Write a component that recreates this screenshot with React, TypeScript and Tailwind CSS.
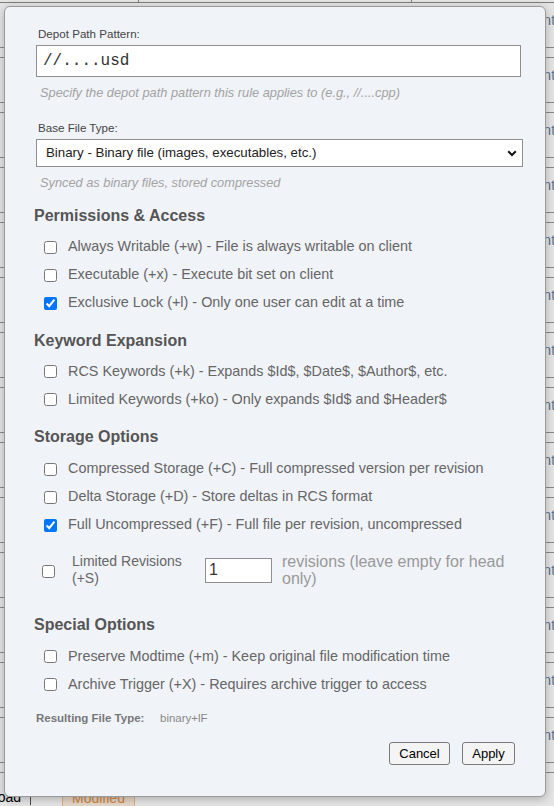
import React from 'react';

type Item = { label: string; checked: boolean };

const sections: { title: string; headGap: string; rowGap: string; items: Item[] }[] = [
  {
    title: 'Permissions & Access',
    headGap: 'mt-[16px]',
    rowGap: 'mt-[8px]',
    items: [
      { label: 'Always Writable (+w) - File is always writable on client', checked: false },
      { label: 'Executable (+x) - Execute bit set on client', checked: false },
      { label: 'Exclusive Lock (+l) - Only one user can edit at a time', checked: true },
    ],
  },
  {
    title: 'Keyword Expansion',
    headGap: 'mt-[14px]',
    rowGap: 'mt-[7.5px]',
    items: [
      { label: 'RCS Keywords (+k) - Expands $Id$, $Date$, $Author$, etc.', checked: false },
      { label: 'Limited Keywords (+ko) - Only expands $Id$ and $Header$', checked: false },
    ],
  },
  {
    title: 'Storage Options',
    headGap: 'mt-[13.5px]',
    rowGap: 'mt-[9px]',
    items: [
      { label: 'Compressed Storage (+C) - Full compressed version per revision', checked: false },
      { label: 'Delta Storage (+D) - Store deltas in RCS format', checked: false },
      { label: 'Full Uncompressed (+F) - Full file per revision, uncompressed', checked: true },
    ],
  },
];

const special: Item[] = [
  { label: 'Preserve Modtime (+m) - Keep original file modification time', checked: false },
  { label: 'Archive Trigger (+X) - Requires archive trigger to access', checked: false },
];

const CheckRow: React.FC<{ item: Item }> = ({ item }) => (
  <label className="flex h-[28px] items-center">
    <input type="checkbox" defaultChecked={item.checked} className="m-0 ml-[8px] h-[13px] w-[13px]" />
    <span className="ml-[11px] text-[14.4px] text-[#666]">{item.label}</span>
  </label>
);

const Heading: React.FC<{ children: React.ReactNode; className?: string }> = ({ children, className }) => (
  <h3 className={`-ml-[2px] text-[16px] font-bold leading-[19px] text-[#555] ${className ?? ''}`}>{children}</h3>
);

// the page behind the dialog: only its edges show
const BackgroundTable: React.FC = () => {
  const rows = Array.from({ length: 14 });
  return (
    <div className="flex flex-col">
      <div className="flex h-[3px] border-b border-[#8c8c8c]">
        <div className="w-[139px] border-r border-[#8c8c8c]" />
        <div className="w-[273px] border-r border-[#8c8c8c]" />
      </div>
      {rows.map((_, i) => (
        <React.Fragment key={i}>
          <div className="flex h-[45px] items-start border-b border-[#9a9a9a] pt-[9px]">
            <span className="ml-[506px] text-[14px] leading-[16px] text-[#5f7b9c]">Content</span>
          </div>
          <div className="h-[10px] border-b border-[#9a9a9a]" />
        </React.Fragment>
      ))}
      <div className="flex h-[45px] items-start pt-[16px]">
        <div className="flex w-[31px] justify-end overflow-hidden border-r border-[#555] pr-[9px]">
          <span className="shrink-0 whitespace-nowrap text-[14px] leading-[16px] text-black">Download</span>
        </div>
        <span className="ml-[31px] border border-[#f3c28e] bg-[#fff0df] px-[9px] text-[14px] leading-[16px] text-[#e8944a]">
          Modified
        </span>
      </div>
    </div>
  );
};

const App: React.FC = () => {
  return (
    <div className="relative h-[806px] w-[554px] overflow-hidden bg-white font-['Liberation_Sans',Arial,sans-serif]">
      <BackgroundTable />
      <div className="absolute inset-0 bg-black/10" />

      <div className="absolute left-[4px] top-[6px] h-[791px] w-[542px] rounded-[6px] border border-[#9a9a9a] bg-[#f0f3f8] pl-[31px] pr-[23px] pt-[20px] shadow-[0_2px_10px_rgba(0,0,0,0.25)]">
        <div className="pl-[2px] text-[11.6px] leading-[14px] text-[#444]">Depot Path Pattern:</div>
        <input
          type="text"
          defaultValue="//....usd"
          className="mt-[4px] h-[32px] w-[485px] border border-[#8f8f8f] bg-white pl-[6px] font-['Liberation_Mono','Courier_New',monospace] text-[16px] text-[#333] outline-none"
        />
        <div className="mt-[9px] pl-[4px] text-[12.8px] italic leading-[14px] text-[#a3a3a3]">
          Specify the depot path pattern this rule applies to (e.g., //....cpp)
        </div>

        <div className="mt-[21px] pl-[2px] text-[11.6px] leading-[14px] text-[#444]">Base File Type:</div>
        <div className="relative mt-[4px] h-[28px] w-[487px]">
          <select className="h-full w-full appearance-none border border-[#8f8f8f] bg-white pl-[9px] text-[13.3px] text-[#222] outline-none">
            <option>Binary - Binary file (images, executables, etc.)</option>
            <option>Text - Text file</option>
            <option>Unicode - Unicode file</option>
          </select>
          <svg className="pointer-events-none absolute right-[6px] top-[11px]" width="10" height="7" viewBox="0 0 10 7">
            <path d="M1.2 1.2 L5 5 L8.8 1.2" fill="none" stroke="#111" strokeWidth="2" />
          </svg>
        </div>
        <div className="mt-[9px] pl-[4px] text-[12.8px] italic leading-[14px] text-[#a3a3a3]">
          Synced as binary files, stored compressed
        </div>

        {sections.map((s) => (
          <div key={s.title} className={s.headGap}>
            <Heading>{s.title}</Heading>
            <div className={`${s.rowGap} flex flex-col`}>
              {s.items.map((it) => (
                <CheckRow key={it.label} item={it} />
              ))}
            </div>
          </div>
        ))}

        <div className="mt-[14px] flex h-[34px] items-center">
          <input type="checkbox" className="m-0 ml-[6px] mt-[2px] h-[13px] w-[13px]" />
          <span className="ml-[17px] w-[121px] text-[14px] leading-[17px] text-[#666]">Limited Revisions (+S)</span>
          <input
            type="text"
            defaultValue="1"
            className="ml-[12px] h-[25px] w-[67px] border border-[#8f8f8f] bg-white pl-[3px] text-[16px] text-[#333] outline-none"
          />
          <span className="ml-[10px] flex-1 text-[16px] leading-[17px] text-[#999]">
            revisions (leave empty for head only)
          </span>
        </div>

        <Heading className="mt-[28px]">Special Options</Heading>
        <div className="mt-[8.5px] flex flex-col">
          {special.map((it) => (
            <CheckRow key={it.label} item={it} />
          ))}
        </div>

        <div className="mt-[13.5px] flex text-[11.5px] leading-[13px]">
          <span className="w-[124px] font-bold text-[#777]">Resulting File Type:</span>
          <span className="text-[#888]">binary+lF</span>
        </div>

        <div className="mt-[17px] flex justify-end gap-[12px] pr-[7px]">
          <button className="h-[23px] w-[61px] rounded-[3px] border border-[#7a7a7a] bg-[#f4f4f4] text-[13px] text-black">
            Cancel
          </button>
          <button className="h-[23px] w-[53px] rounded-[3px] border border-[#7a7a7a] bg-[#f4f4f4] text-[13px] text-black">
            Apply
          </button>
        </div>
      </div>
    </div>
  );
};

export default App;
